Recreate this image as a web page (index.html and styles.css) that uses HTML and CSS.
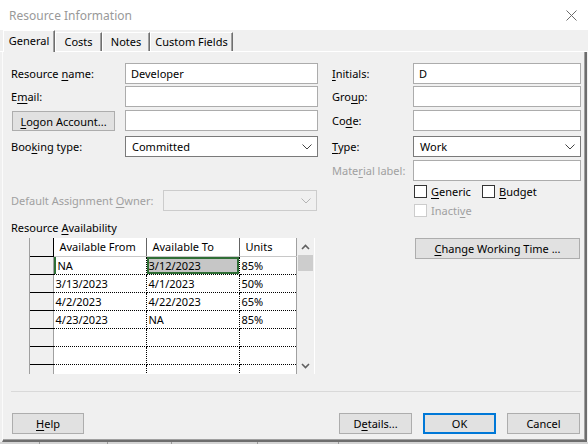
FILE: index.html
```html
<!DOCTYPE html>
<html lang="en">
<head>
    <meta charset="UTF-8">
    <title>Resource Information</title>
    <link rel="stylesheet" href="styles.css">
</head>
<body>
    <div class="titlebar">
        <span class="title">Resource Information</span>
        <svg class="close" width="11" height="11" viewBox="0 0 11 11">
            <path d="M0.5 0.5 L10.5 10.5 M10.5 0.5 L0.5 10.5" stroke="#6b6b6b" stroke-width="1" fill="none"/>
        </svg>
    </div>

    <div class="tabs">
        <div class="tab active">General</div>
        <div class="tab tab-costs">Costs</div>
        <div class="tab tab-notes">Notes</div>
        <div class="tab tab-custom">Custom Fields</div>
    </div>

    <div class="panel">
        <div class="form">
            <div class="col left">
                <div class="row">
                    <label class="lbl">Resource <u>n</u>ame:</label>
                    <div class="input">Developer</div>
                </div>
                <div class="row r-email">
                    <label class="lbl">E<u>m</u>ail:</label>
                    <div class="input"></div>
                </div>
                <div class="row r-logon">
                    <button class="btn logon"><u>L</u>ogon Account...</button>
                    <div class="input"></div>
                </div>
                <div class="row r-booking">
                    <label class="lbl">Boo<u>k</u>ing type:</label>
                    <div class="combo">
                        <span>Committed</span>
                        <svg width="10" height="6" viewBox="0 0 10 6"><path d="M0.5 0.5 L5 5 L9.5 0.5" stroke="#444" fill="none"/></svg>
                    </div>
                </div>
                <div class="row r-owner">
                    <label class="lbl owner-lbl disabled">Default Assignment <u>O</u>wner:</label>
                    <div class="combo off">
                        <span></span>
                        <svg width="10" height="6" viewBox="0 0 10 6"><path d="M0.5 0.5 L5 5 L9.5 0.5" stroke="#b4b4b4" fill="none"/></svg>
                    </div>
                </div>
                <div class="avail-lbl">Resource <u>A</u>vailability</div>
                <div class="avail">
                    <table class="grid">
                        <colgroup>
                            <col class="c-rh"><col class="c-from"><col class="c-to"><col class="c-units">
                        </colgroup>
                        <tr>
                            <th class="rh"></th><th>Available From</th><th>Available To</th><th class="last">Units</th>
                        </tr>
                        <tr>
                            <td class="rh"></td><td class="cur">NA</td><td class="sel">3/12/2023</td><td class="last">85%</td>
                        </tr>
                        <tr>
                            <td class="rh"></td><td>3/13/2023</td><td>4/1/2023</td><td class="last">50%</td>
                        </tr>
                        <tr>
                            <td class="rh"></td><td>4/2/2023</td><td>4/22/2023</td><td class="last">65%</td>
                        </tr>
                        <tr>
                            <td class="rh"></td><td>4/23/2023</td><td>NA</td><td class="last">85%</td>
                        </tr>
                        <tr>
                            <td class="rh"></td><td></td><td></td><td class="last"></td>
                        </tr>
                        <tr>
                            <td class="rh"></td><td></td><td></td><td class="last"></td>
                        </tr>
                        <tr>
                            <td class="rh"></td><td></td><td></td><td class="last"></td>
                        </tr>
                    </table>
                    <div class="vscroll">
                        <div class="arrow">
                            <svg width="9" height="6" viewBox="0 0 9 6"><path d="M1 5 L4.5 1.5 L8 5" stroke="#606060" stroke-width="1.6" fill="none"/></svg>
                        </div>
                        <div class="thumb"></div>
                        <div class="track"></div>
                        <div class="arrow">
                            <svg width="9" height="6" viewBox="0 0 9 6"><path d="M1 1 L4.5 4.5 L8 1" stroke="#606060" stroke-width="1.6" fill="none"/></svg>
                        </div>
                    </div>
                </div>
            </div>

            <div class="col right">
                <div class="row">
                    <label class="lbl"><u>I</u>nitials:</label>
                    <div class="input">D</div>
                </div>
                <div class="row r-email">
                    <label class="lbl">Gro<u>u</u>p:</label>
                    <div class="input"></div>
                </div>
                <div class="row r-logon">
                    <label class="lbl">Co<u>d</u>e:</label>
                    <div class="input"></div>
                </div>
                <div class="row r-booking">
                    <label class="lbl"><u>T</u>ype:</label>
                    <div class="combo">
                        <span>Work</span>
                        <svg width="10" height="6" viewBox="0 0 10 6"><path d="M0.5 0.5 L5 5 L9.5 0.5" stroke="#444" fill="none"/></svg>
                    </div>
                </div>
                <div class="row r-material">
                    <label class="lbl mat-lbl disabled">Mate<u>r</u>ial label:</label>
                    <div class="input"></div>
                </div>
                <div class="checks">
                    <div class="check generic"><span class="box"></span><span><u>G</u>eneric</span></div>
                    <div class="check"><span class="box"></span><span><u>B</u>udget</span></div>
                </div>
                <div class="checks inactive">
                    <div class="check disabled"><span class="box"></span><span>Inacti<u>v</u>e</span></div>
                </div>
                <button class="btn working"><u>C</u>hange Working Time ...</button>
            </div>
        </div>

        <div class="separator"></div>

        <div class="buttons">
            <button class="btn"><u>H</u>elp</button>
            <div class="btn-group">
                <button class="btn">D<u>e</u>tails...</button>
                <button class="btn ok">OK</button>
                <button class="btn">Cancel</button>
            </div>
        </div>
    </div>

    <div class="behind">
        <span class="b1"></span><span class="b2"></span><span class="b3"></span><span class="b4"></span><span class="b5"></span>
    </div>
</body>
</html>
```

FILE: styles.css
```css
* {
    box-sizing: border-box;
}

body {
    margin: 0;
    width: 588px;
    height: 444px;
    overflow: hidden;
    background: #f0f0f0;
    font-family: "Noto Sans", "Open Sans", sans-serif;
    font-size: 11px;
    color: #000;
}

u {
    text-decoration: underline;
    text-underline-offset: 2px;
}

/* title bar */
.titlebar {
    height: 30px;
    background: #fff;
    display: flex;
    align-items: center;
    justify-content: space-between;
    padding: 0 11px 0 9px;
}

.titlebar .title {
    color: #999;
    font-size: 12px;
}

/* tabs */
.tabs {
    height: 22px;
    display: flex;
    align-items: flex-end;
    padding-left: 3px;
    box-shadow: inset 0 -1px #fff;
}

.tab {
    height: 19px;
    margin-bottom: 1px;
    text-align: center;
    line-height: 18px;
    border-top: 1px solid #fff;
    border-left: 1px solid #fff;
    border-right: 1px solid #6f6f6f;
    box-shadow: inset -1px 0 #a0a0a0;
}

.tab.active {
    width: 52px;
    height: 22px;
    margin-bottom: 0;
    line-height: 19px;
    background: #f0f0f0;
}

.tab-costs { width: 47px; }
.tab-notes { width: 48px; }
.tab-custom { width: 83px; }

/* panel */
.panel {
    height: 390px;
    margin: 0 1px 0 2px;
    padding: 11px 4px 0 8px;
    border-left: 1px solid #fbfbfb;
    border-right: 2px solid #6d6d6d;
    border-bottom: 2px solid #6d6d6d;
    box-shadow: inset -1px -1px #a0a0a0;
}

.form {
    display: flex;
    gap: 14px;
}

.col {
    display: flex;
    flex-direction: column;
}

.col.left { width: 307px; }
.col.right { width: 249px; }

.row {
    display: flex;
    align-items: center;
    height: 21px;
}

.r-email { margin-top: 2px; }
.r-logon { margin-top: 3px; }
.r-booking { margin-top: 5px; }
.r-owner { margin-top: 33px; }
.r-material { margin-top: 3px; }

.lbl {
    flex-shrink: 0;
    width: 114px;
}

.right .lbl { width: 81px; }
.lbl.owner-lbl { width: 152px; }

.disabled {
    color: #a0a0a0;
}

.input {
    flex: 1;
    height: 21px;
    background: #fff;
    border: 1px solid #acacac;
    padding-left: 5px;
    line-height: 19px;
}

.combo {
    flex: 1;
    height: 21px;
    background: #fff;
    border: 1px solid #7a7a7a;
    padding: 0 5px 0 6px;
    display: flex;
    align-items: center;
    justify-content: space-between;
}

.combo.off {
    border-color: #cccccc;
    background: #f0f0f0;
    margin-right: 1px;
}

.btn {
    font-family: inherit;
    font-size: 11px;
    color: #000;
    height: 21px;
    width: 73px;
    padding: 0;
    background: #e1e1e1;
    border: 1px solid #adadad;
}

.btn.logon {
    width: 103px;
    height: 20px;
    margin: 1px 10px 0 1px;
}

.btn.ok {
    border: 2px solid #0078d7;
}

/* availability grid */
.avail-lbl {
    margin-top: 10px;
    height: 14px;
    line-height: 14px;
    margin-bottom: 3px;
}

.avail {
    display: flex;
    width: 286px;
    height: 136px;
    margin-left: 18px;
    overflow: hidden;
    background: #fff;
    border-left: 1px solid #a0a0a0;
}

.grid {
    border-collapse: collapse;
    table-layout: fixed;
    width: 266px;
    align-self: flex-start;
}

.c-rh { width: 23px; }
.c-from { width: 93px; }
.c-to { width: 93px; }
.c-units { width: 57px; }

.grid th,
.grid td {
    height: 18px;
    padding: 0 0 0 2px;
    text-align: left;
    font-weight: normal;
    white-space: nowrap;
    overflow: hidden;
    line-height: 17px;
}

.grid th {
    padding-left: 6px;
    border-right: 1px solid #646464;
    border-bottom: 1px solid #c8c8c8;
}

.grid td {
    border-right: 1px dotted #000;
    border-bottom: 1px dotted #000;
}

.grid th.rh,
.grid td.rh {
    background: #f0f0f0;
    border-bottom: 1px solid #000;
    padding: 0;
}

.grid th.rh {
    border-right: 1px solid #000;
}

.grid td.rh {
    border-right: 1px solid #a0a0a0;
}

.grid .last {
    border-right: 1px solid #a0a0a0;
}

.grid td.cur {
    padding-left: 4px;
    box-shadow: inset 2px 0 #2f6e36;
}

.grid td.sel {
    background: #c6c6c6;
    box-shadow: inset 0 0 0 2px #2f6e36;
}

.vscroll {
    width: 19px;
    display: flex;
    flex-direction: column;
    background: #f0f0f0;
    border-right: 1px solid #fff;
}

.vscroll .arrow {
    height: 17px;
    display: flex;
    align-items: center;
    justify-content: center;
}

.vscroll .thumb {
    height: 16px;
    margin: 0 1px 0 1px;
    background: #cdcdcd;
}

.vscroll .track {
    flex: 1;
}

/* right column extras */
.checks {
    display: flex;
    height: 13px;
    margin-top: 4px;
    padding-left: 82px;
}

.checks.inactive {
    margin-top: 6px;
}

.check {
    display: flex;
    align-items: center;
    gap: 4px;
    line-height: 13px;
}

.check.generic {
    width: 68px;
}

.box {
    width: 13px;
    height: 13px;
    background: #fff;
    border: 1px solid #333;
}

.check.disabled .box {
    border-color: #cccccc;
}

.btn.working {
    width: 165px;
    margin: 21px 0 0 83px;
}

/* bottom */
.separator {
    height: 1px;
    margin-top: 17px;
    background: #d9d9d9;
}

.buttons {
    display: flex;
    justify-content: space-between;
    margin-top: 21px;
    padding: 0 1px;
}

.buttons > .btn {
    width: 72px;
}

.btn-group {
    display: flex;
    gap: 11px;
}

.behind {
    height: 2px;
    display: flex;
    background: #d4d4d4;
}

.behind span {
    border-right: 1px solid #9a9a9a;
}

.b1 { width: 40px; }
.b2 { width: 68px; }
.b3 { width: 64px; }
.b4 { width: 86px; }
.b5 { width: 81px; }
```
